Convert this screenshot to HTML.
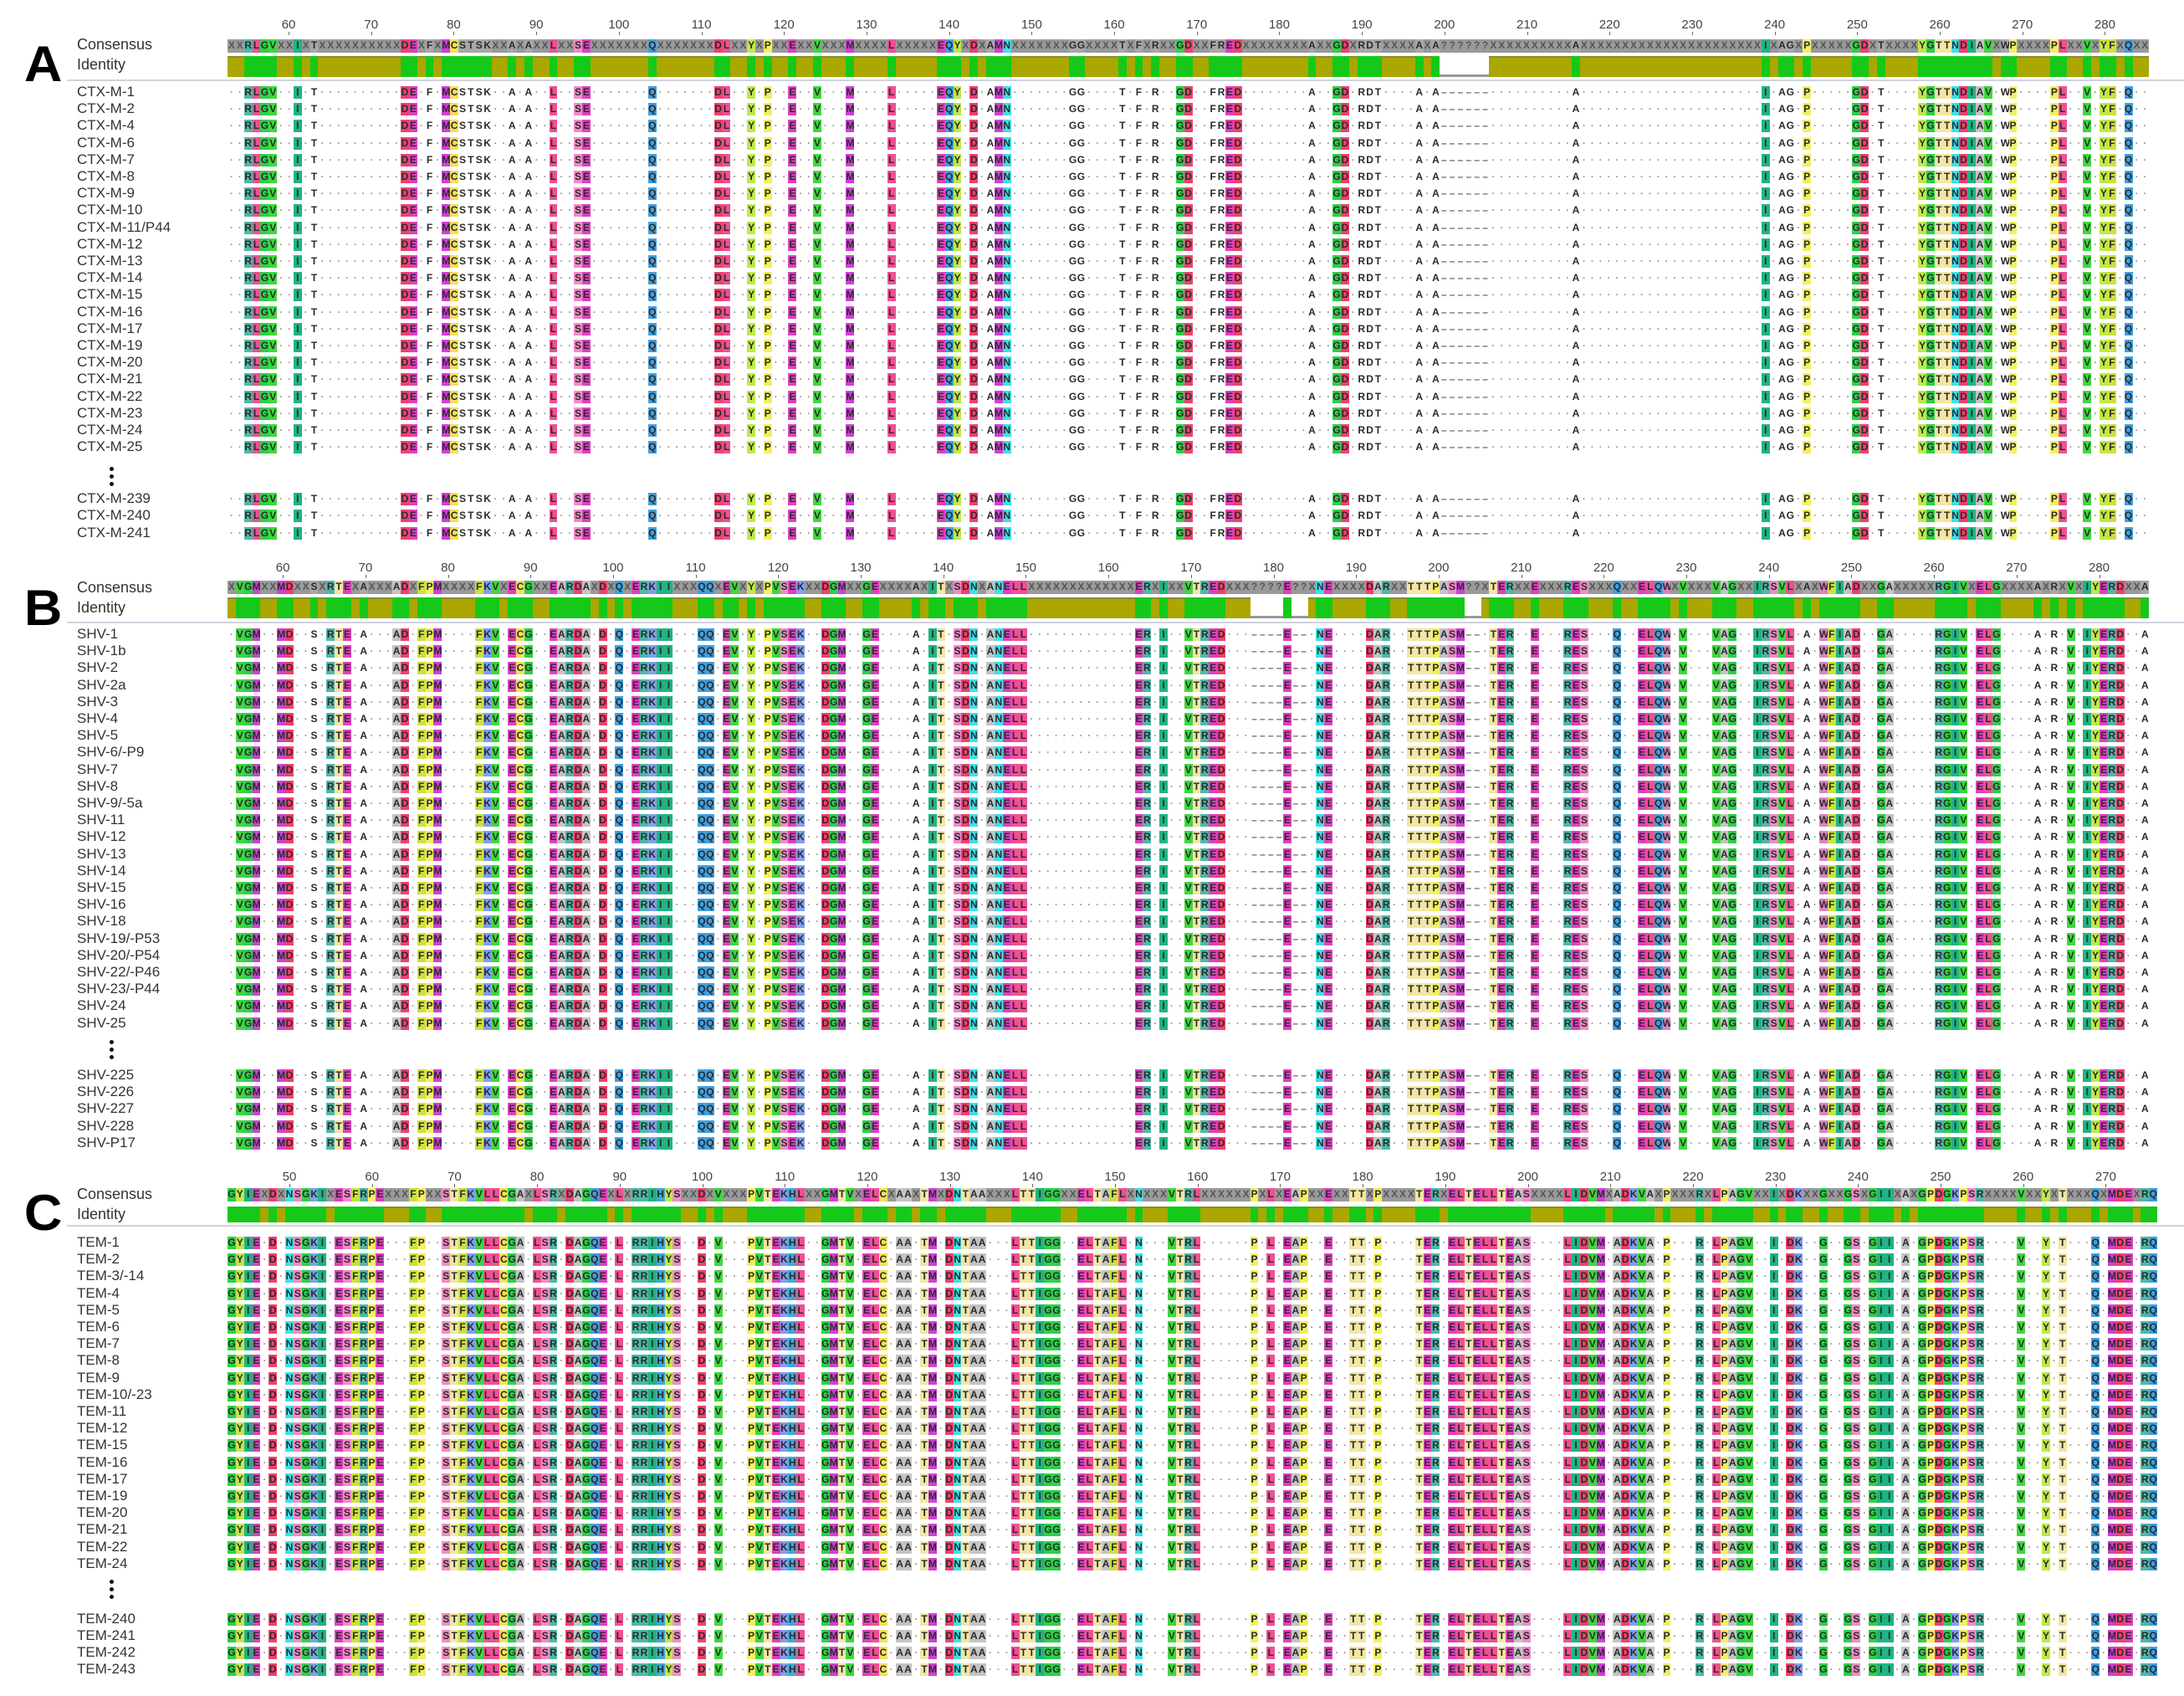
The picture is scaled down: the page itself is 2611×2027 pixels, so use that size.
<!DOCTYPE html>
<html><head><meta charset="utf-8">
<style>
html,body{margin:0;padding:0;background:#fff;}
body{width:2611px;height:2027px;position:relative;overflow:hidden;font-family:"Liberation Sans Narrow","Liberation Sans",sans-serif;}
.big{position:absolute;left:30px;font:bold 60px/1 "Liberation Sans",sans-serif;color:#000;transform:scaleX(1.05);}
.lab{position:absolute;left:92px;font-size:17px;color:#333;line-height:20px;white-space:nowrap;}
.hl{position:absolute;left:92px;font-size:18px;color:#333;line-height:22px;}
.sep{position:absolute;left:80px;right:0;height:2px;background:#cfd3de;}
.row{position:absolute;left:272px;display:flex;height:15px;}
.row span{width:9.87px;flex:none;height:15px;text-align:center;font:bold 12px/15px "Liberation Sans Narrow","Liberation Sans",sans-serif;color:#2a2a2a;overflow:hidden;}
.num{position:absolute;font:15px/16px "Liberation Sans Narrow","Liberation Sans",sans-serif;color:#444;transform:translateX(-50%);}
.tick{position:absolute;width:1px;height:4px;background:#666;}
.vd{position:absolute;left:131px;width:5px;height:5px;border-radius:50%;background:#111;}
.idbar{position:absolute;left:272px;display:flex;}
.idbar div{flex:none;width:9.87px;}
</style></head><body>

<div class="big" style="top:47px">A</div>
<div class="hl" style="top:42px">Consensus</div>
<div class="hl" style="top:66px">Identity</div>
<div class="sep" style="top:95px"></div>

<div class="big" style="top:697px">B</div>
<div class="hl" style="top:691px">Consensus</div>
<div class="hl" style="top:715px">Identity</div>
<div class="sep" style="top:743px"></div>

<div class="big" style="top:1420px">C</div>
<div class="hl" style="top:1416px">Consensus</div>
<div class="hl" style="top:1440px">Identity</div>
<div class="sep" style="top:1464px"></div>

<div id="labels">
<div class="lab" style="top:100px">CTX-M-1</div>
<div class="lab" style="top:120px">CTX-M-2</div>
<div class="lab" style="top:140px">CTX-M-4</div>
<div class="lab" style="top:161px">CTX-M-6</div>
<div class="lab" style="top:181px">CTX-M-7</div>
<div class="lab" style="top:201px">CTX-M-8</div>
<div class="lab" style="top:221px">CTX-M-9</div>
<div class="lab" style="top:241px">CTX-M-10</div>
<div class="lab" style="top:262px">CTX-M-11/P44</div>
<div class="lab" style="top:282px">CTX-M-12</div>
<div class="lab" style="top:302px">CTX-M-13</div>
<div class="lab" style="top:322px">CTX-M-14</div>
<div class="lab" style="top:342px">CTX-M-15</div>
<div class="lab" style="top:363px">CTX-M-16</div>
<div class="lab" style="top:383px">CTX-M-17</div>
<div class="lab" style="top:403px">CTX-M-19</div>
<div class="lab" style="top:423px">CTX-M-20</div>
<div class="lab" style="top:443px">CTX-M-21</div>
<div class="lab" style="top:464px">CTX-M-22</div>
<div class="lab" style="top:484px">CTX-M-23</div>
<div class="lab" style="top:504px">CTX-M-24</div>
<div class="lab" style="top:524px">CTX-M-25</div>
<div class="lab" style="top:586px">CTX-M-239</div>
<div class="lab" style="top:606px">CTX-M-240</div>
<div class="lab" style="top:627px">CTX-M-241</div>

<div class="lab" style="top:748px">SHV-1</div>
<div class="lab" style="top:768px">SHV-1b</div>
<div class="lab" style="top:788px">SHV-2</div>
<div class="lab" style="top:809px">SHV-2a</div>
<div class="lab" style="top:829px">SHV-3</div>
<div class="lab" style="top:849px">SHV-4</div>
<div class="lab" style="top:869px">SHV-5</div>
<div class="lab" style="top:889px">SHV-6/-P9</div>
<div class="lab" style="top:910px">SHV-7</div>
<div class="lab" style="top:930px">SHV-8</div>
<div class="lab" style="top:950px">SHV-9/-5a</div>
<div class="lab" style="top:970px">SHV-11</div>
<div class="lab" style="top:990px">SHV-12</div>
<div class="lab" style="top:1011px">SHV-13</div>
<div class="lab" style="top:1031px">SHV-14</div>
<div class="lab" style="top:1051px">SHV-15</div>
<div class="lab" style="top:1071px">SHV-16</div>
<div class="lab" style="top:1091px">SHV-18</div>
<div class="lab" style="top:1112px">SHV-19/-P53</div>
<div class="lab" style="top:1132px">SHV-20/-P54</div>
<div class="lab" style="top:1152px">SHV-22/-P46</div>
<div class="lab" style="top:1172px">SHV-23/-P44</div>
<div class="lab" style="top:1192px">SHV-24</div>
<div class="lab" style="top:1213px">SHV-25</div>
<div class="lab" style="top:1275px">SHV-225</div>
<div class="lab" style="top:1295px">SHV-226</div>
<div class="lab" style="top:1315px">SHV-227</div>
<div class="lab" style="top:1336px">SHV-228</div>
<div class="lab" style="top:1356px">SHV-P17</div>

<div class="lab" style="top:1475px">TEM-1</div>
<div class="lab" style="top:1495px">TEM-2</div>
<div class="lab" style="top:1515px">TEM-3/-14</div>
<div class="lab" style="top:1536px">TEM-4</div>
<div class="lab" style="top:1556px">TEM-5</div>
<div class="lab" style="top:1576px">TEM-6</div>
<div class="lab" style="top:1596px">TEM-7</div>
<div class="lab" style="top:1616px">TEM-8</div>
<div class="lab" style="top:1637px">TEM-9</div>
<div class="lab" style="top:1657px">TEM-10/-23</div>
<div class="lab" style="top:1677px">TEM-11</div>
<div class="lab" style="top:1697px">TEM-12</div>
<div class="lab" style="top:1717px">TEM-15</div>
<div class="lab" style="top:1738px">TEM-16</div>
<div class="lab" style="top:1758px">TEM-17</div>
<div class="lab" style="top:1778px">TEM-19</div>
<div class="lab" style="top:1798px">TEM-20</div>
<div class="lab" style="top:1818px">TEM-21</div>
<div class="lab" style="top:1839px">TEM-22</div>
<div class="lab" style="top:1859px">TEM-24</div>
<div class="lab" style="top:1925px">TEM-240</div>
<div class="lab" style="top:1945px">TEM-241</div>
<div class="lab" style="top:1965px">TEM-242</div>
<div class="lab" style="top:1985px">TEM-243</div>
</div>

<div class="vd" style="top:558px"></div><div class="vd" style="top:567px"></div><div class="vd" style="top:576px"></div>
<div class="vd" style="top:1243px"></div><div class="vd" style="top:1252px"></div><div class="vd" style="top:1261px"></div>
<div class="vd" style="top:1888px"></div><div class="vd" style="top:1897px"></div><div class="vd" style="top:1906px"></div>

<div id="gen"></div>

<script>
var W=9.87,X0=272;
var COL={A:"#c4c4c4",R:"#4fb8a8",N:"#40e0e8",D:"#f04070",C:"#f2e05a",Q:"#3fa0e0",E:"#e040c0",G:"#2ed04a",H:"#40a8d8",I:"#1fb483",L:"#f05094",K:"#7fa0f0",M:"#d040d8",F:"#cde040",P:"#f2f060",S:"#f08cc8",T:"#f2e6a4",W:"#e080c8",Y:"#c0e848",V:"#3ed83e"};
function build(segs,n){var a=[];for(var i=0;i<n;i++)a.push('·');segs.forEach(function(s){for(var i=0;i<s[1].length;i++){if(s[0]+i<n)a[s[0]+i]=s[1][i];}});return a;}
var A=build([[2,"RLGV"],[8,"I"],[10,"t"],[21,"DE"],[24,"f"],[26,"MCstsk"],[34,"a"],[36,"a"],[39,"L"],[42,"SE"],[51,"Q"],[59,"DL"],[63,"Y"],[65,"P"],[68,"E"],[71,"V"],[75,"M"],[80,"L"],[86,"EQY"],[90,"D"],[92,"aMN"],[102,"gg"],[108,"t"],[110,"f"],[112,"r"],[115,"GD"],[119,"frED"],[131,"a"],[134,"GD"],[137,"rdt"],[144,"a"],[146,"a------"],[163,"a"],[186,"I"],[188,"ag"],[191,"P"],[197,"GD"],[200,"t"],[205,"YGTTNDIAV"],[215,"wP"],[221,"PL"],[225,"V"],[227,"YF"],[230,"Q"]],233);
var B=build([[1,"VGM"],[6,"MD"],[10,"s"],[12,"RTE"],[16,"a"],[20,"AD"],[23,"FPM"],[30,"FKV"],[34,"ECG"],[39,"EAR"],[42,"DA"],[45,"D"],[47,"Q"],[49,"ERKII"],[57,"QQ"],[60,"EV"],[63,"Y"],[65,"PVSEK"],[72,"DGM"],[77,"GE"],[83,"a"],[85,"IT"],[88,"SDN"],[92,"ANELL"],[110,"ER"],[113,"I"],[116,"VTRED"],[124,"----E--"],[132,"NE"],[138,"DAR"],[143,"TTTPASM--"],[153,"TER"],[158,"E"],[162,"RES"],[168,"Q"],[171,"ELQW"],[176,"V"],[180,"VAG"],[185,"IRSVL"],[191,"a"],[193,"WFIAD"],[200,"GA"],[207,"RGIV"],[212,"ELG"],[219,"a"],[221,"r"],[223,"V"],[225,"IYERD"],[232,"a"]],233);
var C=build([[0,"GYIE"],[5,"D"],[7,"NSGKI"],[13,"ESFRPE"],[22,"FP"],[26,"STFKVLLCGA"],[37,"LSR"],[41,"DAGQE"],[47,"L"],[49,"RRIHYS"],[57,"D"],[59,"V"],[63,"PVTEKHL"],[72,"GMTV"],[77,"ELC"],[81,"AA"],[84,"TM"],[87,"DNTAA"],[95,"LTTIGG"],[103,"ELTAFL"],[110,"N"],[114,"VTRL"],[124,"P"],[126,"L"],[128,"EA"],[130,"P"],[133,"E"],[136,"TT"],[139,"P"],[144,"TER"],[148,"ELT"],[151,"ELLTEAS"],[162,"LIDVM"],[168,"ADKVA"],[174,"P"],[178,"R"],[180,"LPAGV"],[187,"I"],[189,"DK"],[193,"G"],[196,"GS"],[199,"GII"],[203,"A"],[205,"GPDGKPSR"],[217,"V"],[220,"Y"],[222,"T"],[226,"Q"],[228,"MDE"],[232,"RQ"]],234);

var out=[];
function seqRow(arr,top){
  var h='<div class="row" style="top:'+top+'px">';
  for(var i=0;i<arr.length;i++){var c=arr[i];
    if(c=='·')h+='<span style="color:#999">·</span>';
    else if(c=='-')h+='<span style="color:#666">–</span>';
    else if(c==c.toUpperCase())h+='<span style="background:'+(COL[c]||'#ccc')+'">'+c+'</span>';
    else h+='<span>'+c.toUpperCase()+'</span>';}
  return h+'</div>';}
function consRow(arr,top){
  var h='<div class="row" style="top:'+top+'px;height:16px">';
  for(var i=0;i<arr.length;i++){var c=arr[i];
    if(c=='·')h+='<span style="background:#9a9a9a;color:#555;height:16px">X</span>';
    else if(c=='-')h+='<span style="background:#9a9a9a;color:#555;height:16px">?</span>';
    else if(c==c.toUpperCase())h+='<span style="background:'+(COL[c]||'#ccc')+';height:16px">'+c+'</span>';
    else h+='<span style="background:#a8a8a8;height:16px">'+c.toUpperCase()+'</span>';}
  return h+'</div>';}
function idRow(arr,top,hh){
  var h='<div class="idbar" style="top:'+top+'px;height:'+hh+'px">';
  for(var i=0;i<arr.length;i++){var c=arr[i];
    if(c=='·')h+='<div style="background:#aaa700;height:'+hh+'px;border-top:2px solid #8a8a30;box-sizing:border-box"></div>';
    else if(c=='-')h+='<div style="height:'+hh+'px;border-bottom:3px solid #999;box-sizing:border-box"></div>';
    else h+='<div style="background:#16c81a;height:'+hh+'px"></div>';}
  return h+'</div>';}
function ruler(top,off,from,to){
  for(var n=from;n<=to;n+=10){var x=X0+(n-off)*W;
    out.push('<div class="num" style="left:'+x+'px;top:'+(top-8)+'px">'+n+'</div>');
    out.push('<div class="tick" style="left:'+x+'px;top:'+(top+8)+'px"></div>');}}
function panel(arr,rTop,off,from,to,cTop,iTop,iH,rows){
  ruler(rTop,off,from,to);
  out.push(consRow(arr,cTop));
  out.push(idRow(arr,iTop,iH));
  rows.forEach(function(y){out.push(seqRow(arr,y-7));});}
function seq(start,n,step){var r=[];for(var i=0;i<n;i++)r.push(Math.round(start+i*step));return r;}

panel(A,30,52.6,60,280,47,67,25,seq(110,22,20.2).concat([596,616,637]));
panel(B,679,53.3,60,280,694,714,25,seq(758,24,20.2).concat(seq(1285,5,20.2)));
panel(C,1407,42.5,50,270,1420,1442,19,seq(1485,20,20.2).concat([1935,1955,1975,1995]));
document.getElementById('gen').innerHTML=out.join('');
</script>
</body></html>
